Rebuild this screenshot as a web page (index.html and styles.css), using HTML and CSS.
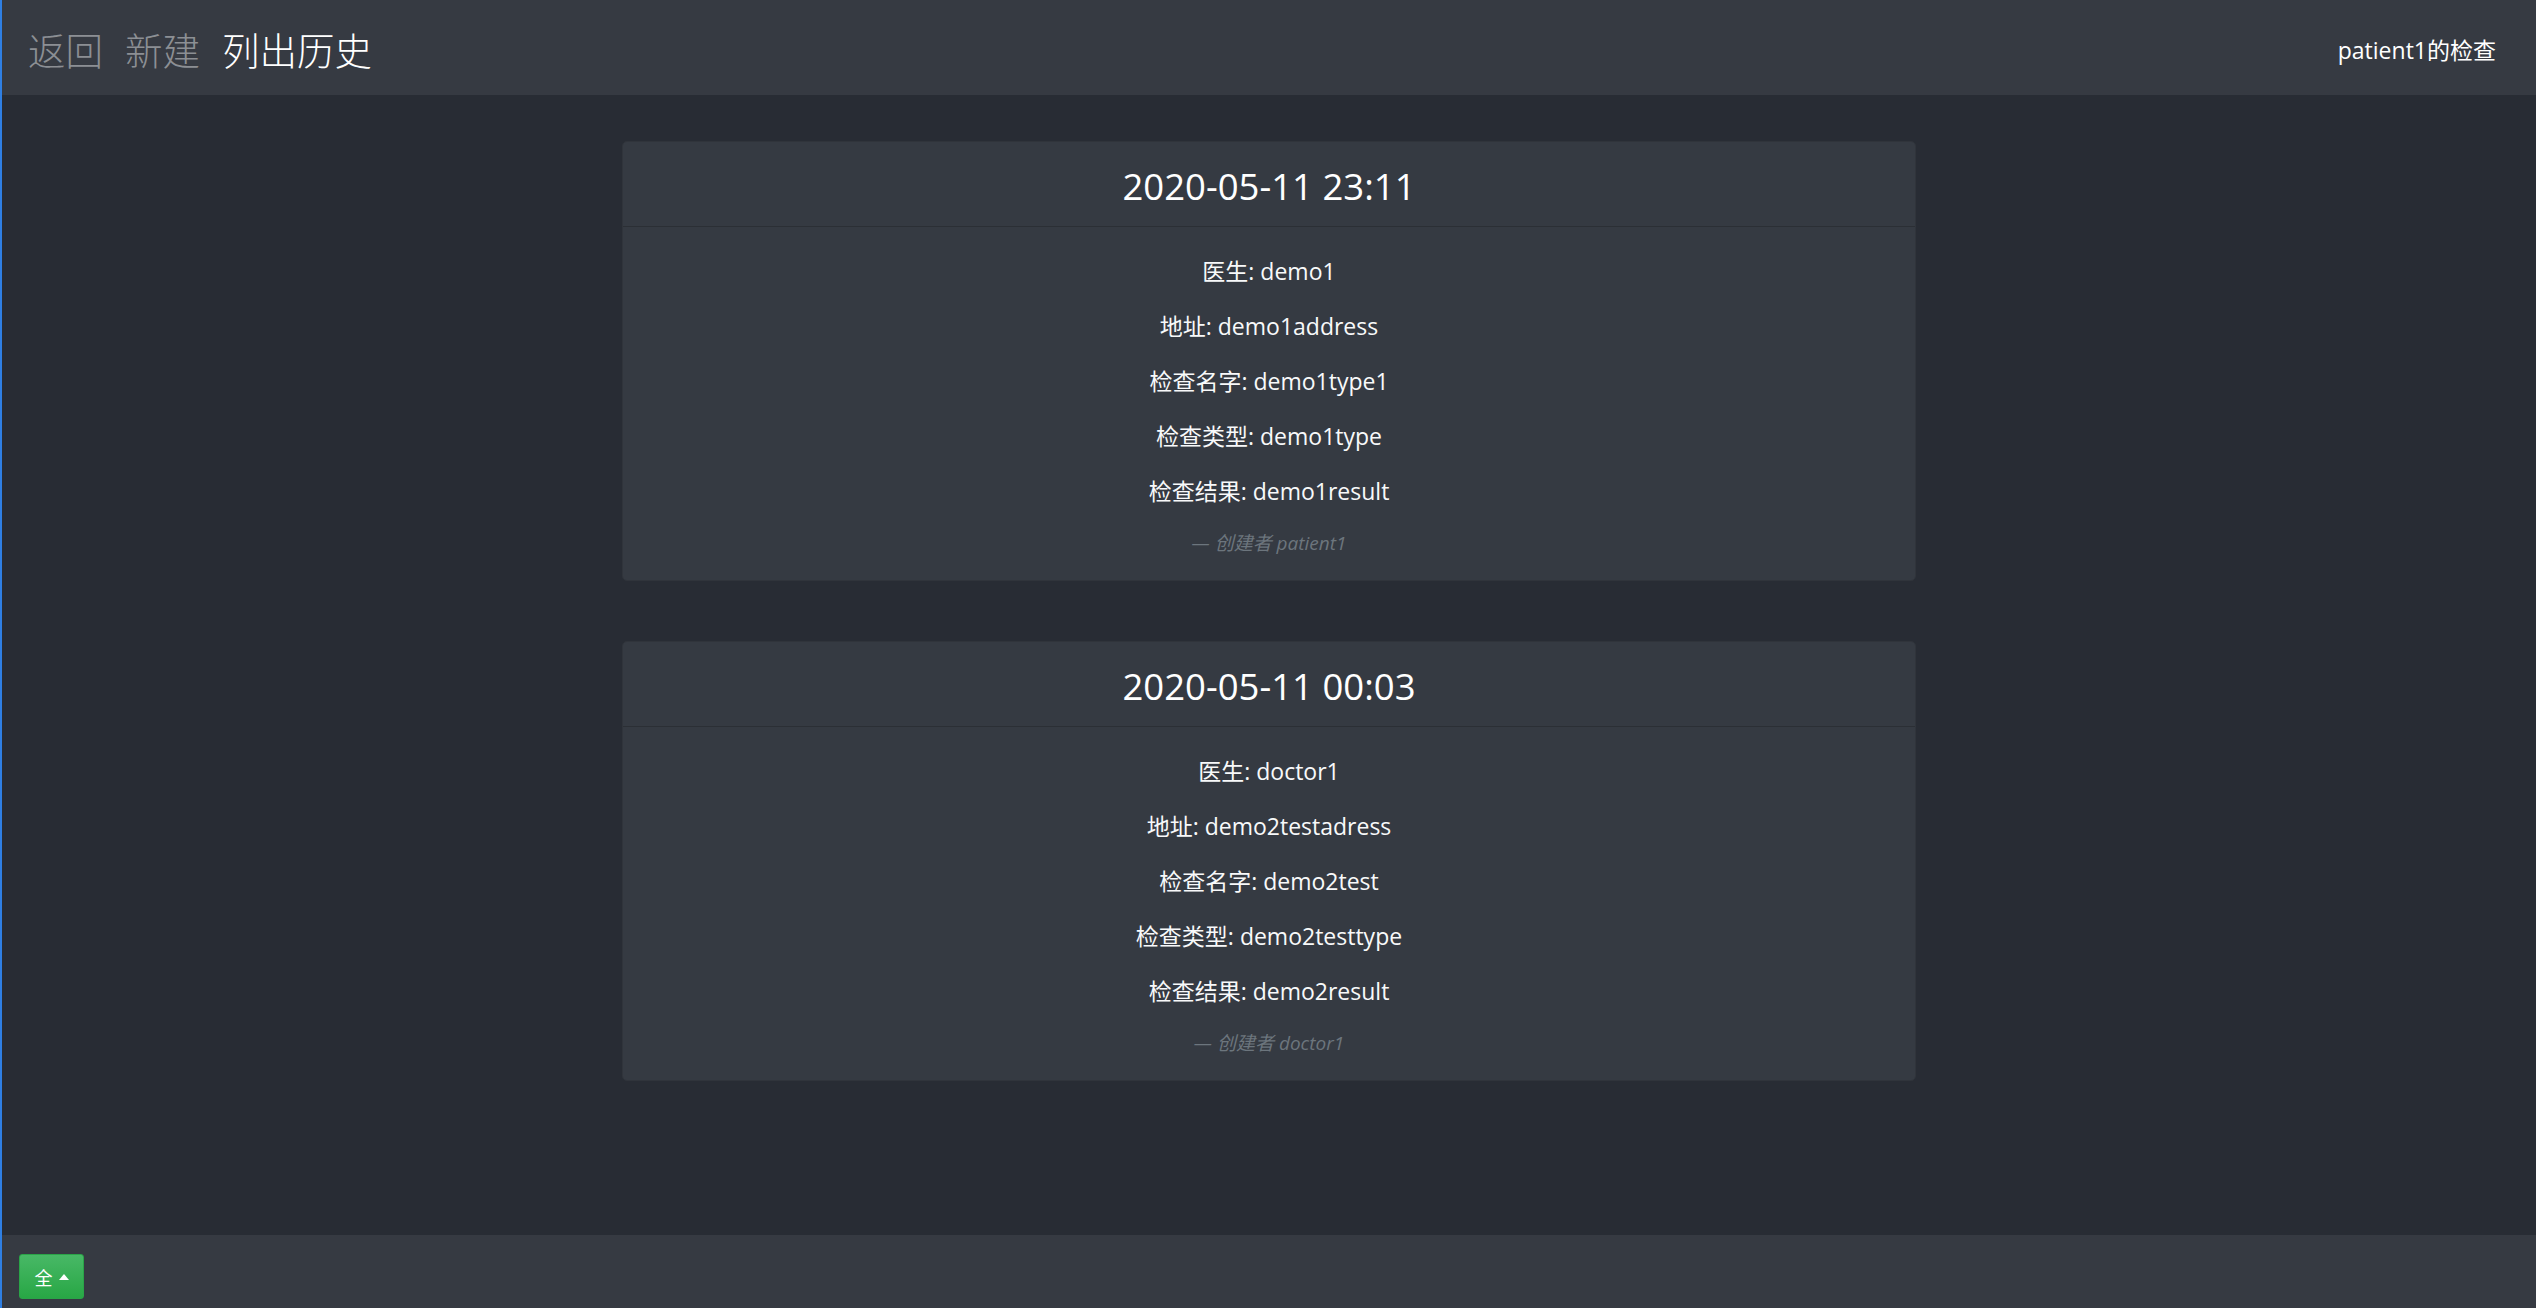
FILE: index.html
```html
<!DOCTYPE html>
<html lang="zh">
<head>
<meta charset="utf-8">
<title>patient1的检查</title>
<link rel="stylesheet" href="styles.css">
</head>
<body>
<nav class="navbar">
  <div class="nav-links">
    <a class="nav-item" href="#">返回</a>
    <a class="nav-item" href="#">新建</a>
    <a class="nav-item active" href="#">列出历史</a>
  </div>
  <div class="brand">patient1的检查</div>
</nav>
<main class="main">
  <section class="card">
    <header class="card-header"><h3 class="card-title">2020-05-11 23:11</h3></header>
    <div class="card-body">
      <p class="line">医生: demo1</p>
      <p class="line">地址: demo1address</p>
      <p class="line">检查名字: demo1type1</p>
      <p class="line">检查类型: demo1type</p>
      <p class="line">检查结果: demo1result</p>
      <footer class="byline">— 创建者 <cite>patient1</cite></footer>
    </div>
  </section>
  <section class="card">
    <header class="card-header"><h3 class="card-title">2020-05-11 00:03</h3></header>
    <div class="card-body">
      <p class="line">医生: doctor1</p>
      <p class="line">地址: demo2testadress</p>
      <p class="line">检查名字: demo2test</p>
      <p class="line">检查类型: demo2testtype</p>
      <p class="line">检查结果: demo2result</p>
      <footer class="byline">— 创建者 <cite>doctor1</cite></footer>
    </div>
  </section>
</main>
<div class="toolbar">
  <button class="btn-all" type="button">全<svg class="caret" width="10" height="6" viewBox="0 0 10 6"><path d="M0 6 L5 0 L10 6 Z" fill="#fff"/></svg></button>
</div>
</body>
</html>
```
FILE: styles.css
```css
html, body {
  margin: 0;
  padding: 0;
}
body {
  min-height: 100vh;
  box-sizing: border-box;
  display: flex;
  flex-direction: column;
  background: #282c34;
  border-left: 2px solid #2f7fe3;
  font-family: "Open Sans", "Noto Sans CJK SC", sans-serif;
  color: #f8f9fa;
}
.navbar {
  height: 95px;
  background: #363a42;
  display: flex;
  align-items: center;
  justify-content: space-between;
  padding: 0 40px 0 26px;
  flex-shrink: 0;
}
.nav-links {
  display: flex;
  gap: 22px;
  padding-top: 2px;
}
.nav-item {
  font-family: "Noto Sans CJK SC", sans-serif;
  font-weight: 300;
  font-size: 37.5px;
  color: #8c8f94;
  text-decoration: none;
  line-height: 1;
}
.nav-item.active {
  color: #ffffff;
}
.brand {
  font-size: 23px;
  color: #ffffff;
  padding-top: 2px;
}
.main {
  flex: 1;
  display: flex;
  flex-direction: column;
  align-items: center;
  gap: 60px;
  padding-top: 46px;
  padding-bottom: 40px;
}
.card {
  width: 1294px;
  background: #353a42;
  border: 1px solid #30343b;
  border-radius: 5px;
  box-sizing: border-box;
  overflow: hidden;
}
.card-header {
  padding: 21px 20px 17px;
  border-bottom: 1px solid #2b2f35;
  text-align: center;
}
.card-title {
  margin: 0;
  font-weight: 400;
  font-size: 36.5px;
  line-height: 46px;
  color: #ffffff;
}
.card-body {
  padding: 28px 27px 24px;
  text-align: center;
}
.line {
  margin: 0 0 22px;
  font-size: 23px;
  line-height: 33px;
}
.byline {
  font-size: 19px;
  line-height: 26px;
  color: #6c757d;
  font-style: italic;
}
.byline cite {
  font-style: italic;
}
.toolbar {
  height: 73px;
  flex-shrink: 0;
  box-sizing: border-box;
  background: #363a42;
  padding: 19px 0 0 17px;
}
.btn-all {
  width: 65px;
  height: 45px;
  box-sizing: border-box;
  border: 1px solid #2aa448;
  border-radius: 3px;
  background: linear-gradient(#48b866, #28a745);
  color: #ffffff;
  font-family: "Noto Sans CJK SC", sans-serif;
  font-size: 18px;
  display: flex;
  align-items: center;
  justify-content: center;
  gap: 6px;
  padding: 0;
}
.caret {
  display: block;
}
```
